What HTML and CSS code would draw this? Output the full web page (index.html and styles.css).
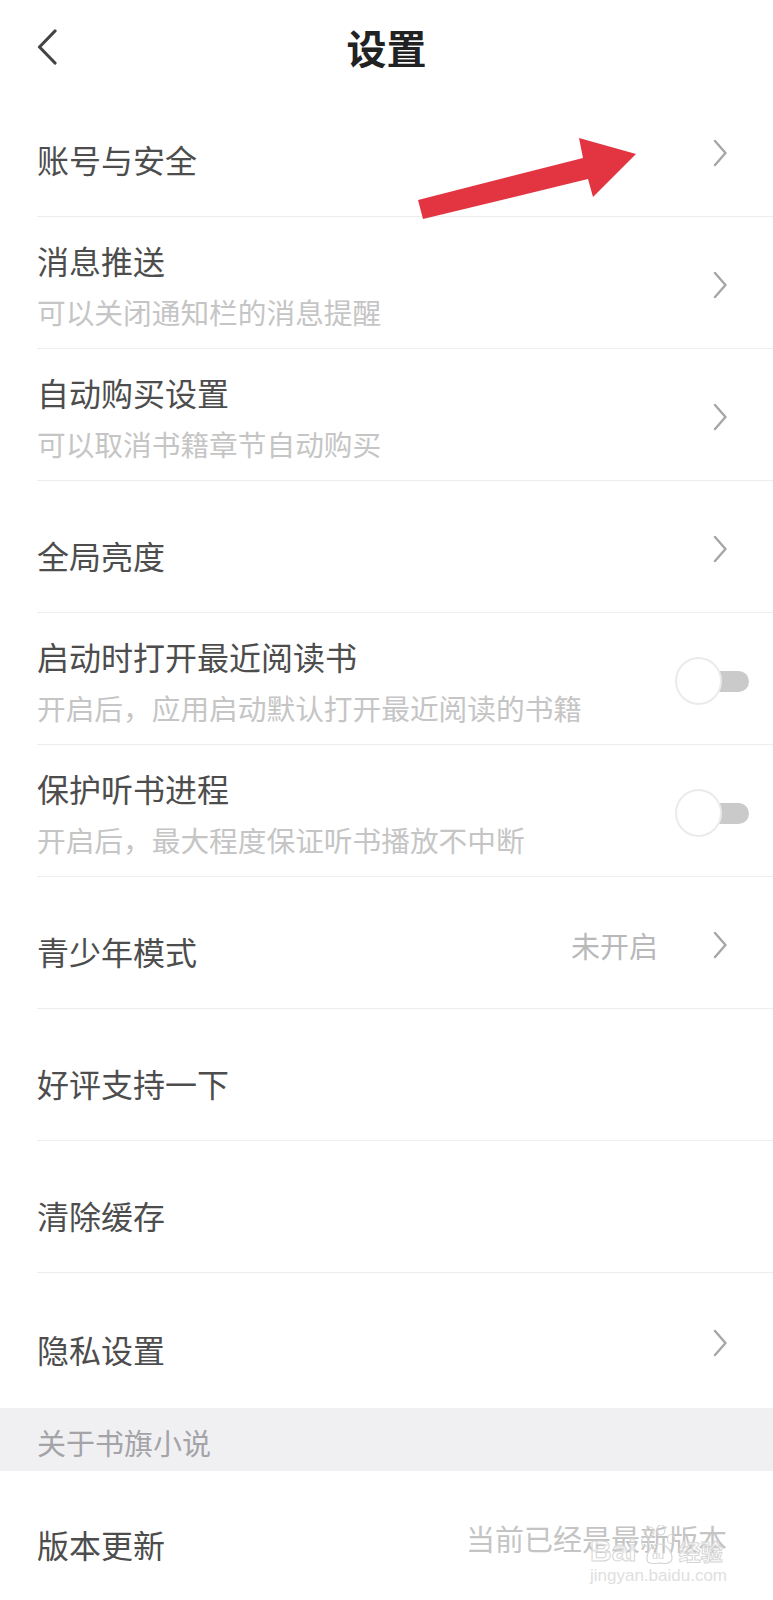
FILE: index.html
```html
<!DOCTYPE html>
<html lang="zh-CN">
<head>
    <meta charset="UTF-8">
    <meta name="viewport" content="width=device-width, initial-scale=1.0">
    <title>设置</title>
    <link rel="stylesheet" href="styles.css">
</head>
<body>
    <div class="page">
        <header class="nav">
            <span class="back">
                <svg width="20" height="36" viewBox="0 0 20 36"><path d="M18 2 L2.5 18 L18 34" fill="none" stroke="#444" stroke-width="3.2" stroke-linecap="round" stroke-linejoin="round"/></svg>
            </span>
            <h1 class="nav-title">设置</h1>
            <span></span>
        </header>

        <ul class="settings">
            <li class="row">
                <div class="row-main"><div class="row-title single">账号与安全</div></div>
                <svg class="chev" width="14" height="28" viewBox="0 0 14 28"><path d="M2 2 L12.5 14 L2 26" fill="none" stroke="#a6a6a6" stroke-width="2.4" stroke-linecap="round" stroke-linejoin="round"/></svg>
            </li>
            <li class="row">
                <div class="row-main">
                    <div class="row-title">消息推送</div>
                    <div class="row-sub">可以关闭通知栏的消息提醒</div>
                </div>
                <svg class="chev" width="14" height="28" viewBox="0 0 14 28"><path d="M2 2 L12.5 14 L2 26" fill="none" stroke="#a6a6a6" stroke-width="2.4" stroke-linecap="round" stroke-linejoin="round"/></svg>
            </li>
            <li class="row">
                <div class="row-main">
                    <div class="row-title">自动购买设置</div>
                    <div class="row-sub">可以取消书籍章节自动购买</div>
                </div>
                <svg class="chev" width="14" height="28" viewBox="0 0 14 28"><path d="M2 2 L12.5 14 L2 26" fill="none" stroke="#a6a6a6" stroke-width="2.4" stroke-linecap="round" stroke-linejoin="round"/></svg>
            </li>
            <li class="row">
                <div class="row-main"><div class="row-title single">全局亮度</div></div>
                <svg class="chev" width="14" height="28" viewBox="0 0 14 28"><path d="M2 2 L12.5 14 L2 26" fill="none" stroke="#a6a6a6" stroke-width="2.4" stroke-linecap="round" stroke-linejoin="round"/></svg>
            </li>
            <li class="row">
                <div class="row-main">
                    <div class="row-title">启动时打开最近阅读书</div>
                    <div class="row-sub">开启后，应用启动默认打开最近阅读的书籍</div>
                </div>
                <span class="toggle"><span class="toggle-track"></span><span class="toggle-knob"></span></span>
            </li>
            <li class="row">
                <div class="row-main">
                    <div class="row-title">保护听书进程</div>
                    <div class="row-sub">开启后，最大程度保证听书播放不中断</div>
                </div>
                <span class="toggle"><span class="toggle-track"></span><span class="toggle-knob"></span></span>
            </li>
            <li class="row">
                <div class="row-main"><div class="row-title single">青少年模式</div></div>
                <span class="row-value">未开启</span>
                <svg class="chev" width="14" height="28" viewBox="0 0 14 28"><path d="M2 2 L12.5 14 L2 26" fill="none" stroke="#a6a6a6" stroke-width="2.4" stroke-linecap="round" stroke-linejoin="round"/></svg>
            </li>
            <li class="row">
                <div class="row-main"><div class="row-title single">好评支持一下</div></div>
            </li>
            <li class="row">
                <div class="row-main"><div class="row-title single">清除缓存</div></div>
            </li>
            <li class="row last">
                <div class="row-main"><div class="row-title single">隐私设置</div></div>
                <svg class="chev" width="14" height="28" viewBox="0 0 14 28"><path d="M2 2 L12.5 14 L2 26" fill="none" stroke="#a6a6a6" stroke-width="2.4" stroke-linecap="round" stroke-linejoin="round"/></svg>
            </li>
        </ul>

        <div class="section-head">关于书旗小说</div>

        <ul class="settings">
            <li class="row version">
                <div class="row-main"><div class="row-title single">版本更新</div></div>
                <span class="row-value end">当前已经是最新版本</span>
            </li>
        </ul>

        <!-- red arrow drawn on top of the screenshot -->
        <svg class="pointer" width="773" height="240" viewBox="0 0 773 240">
            <polygon points="418,200 583,158 579,138 636,154 593,197 588,179 423,219" fill="#e23541"/>
        </svg>

        <div class="watermark">
            <div class="wm-logo">
                <span class="wm-bai">Bai</span>
                <svg class="wm-paw" width="36" height="40" viewBox="0 0 36 40">
                    <g fill="none" stroke="#d6d6d6" stroke-width="1.2">
                        <ellipse cx="9" cy="7" rx="4" ry="5"/>
                        <ellipse cx="20" cy="5" rx="4" ry="5"/>
                        <ellipse cx="4" cy="17" rx="3.5" ry="4.5"/>
                        <ellipse cx="30" cy="14" rx="3.5" ry="4.5"/>
                        <path d="M6 34 C6 24 13 19 18 19 C24 19 31 25 31 33 C31 39 24 39 18 38 C12 39 6 39 6 34 Z"/>
                    </g>
                    <text x="11" y="34" class="wm-du">du</text>
                </svg>
                <span class="wm-jy">经验</span>
            </div>
            <div class="wm-url">jingyan.baidu.com</div>
        </div>
    </div>
</body>
</html>
```

FILE: styles.css
```css
* {
    box-sizing: border-box;
}

body {
    margin: 0;
    background: #ffffff;
    font-family: "Noto Sans CJK SC", "Noto Sans", sans-serif;
}

.page {
    position: relative;
    width: 773px;
    height: 1600px;
    overflow: hidden;
}

.nav {
    height: 85px;
    display: grid;
    grid-template-columns: 1fr auto 1fr;
    align-items: start;
    padding-top: 21px;
}

.back {
    padding-left: 37px;
    padding-top: 8px;
    height: 52px;
}

.back svg {
    display: block;
}

.nav-title {
    margin: 0;
    font-size: 40px;
    line-height: 52px;
    font-weight: 700;
    color: #222222;
}

.settings {
    list-style: none;
    margin: 0;
    padding: 0;
}

.row {
    height: 132px;
    margin-left: 37px;
    padding: 4px 24px 0 0;
    border-bottom: 1px solid #ededed;
    display: flex;
    align-items: center;
}

.row.last {
    height: 135px;
    border-bottom: none;
}

.row.version {
    height: 130px;
    border-bottom: none;
}

.row-main {
    flex: 1;
    min-width: 0;
}

.row-title {
    font-size: 32px;
    line-height: 44px;
    color: #4d4d4d;
}

.row-title.single {
    margin-top: 12px;
}

.row-sub {
    margin-top: 10px;
    font-size: 28.7px;
    line-height: 40px;
    color: #c5c5c5;
}

.row-value {
    font-size: 29px;
    line-height: 40px;
    color: #b9b9b9;
    margin-right: 55px;
}

.row-value.end {
    margin-right: 22px;
    color: #c4c4c4;
}

.chev {
    display: block;
    margin-right: 22px;
}

.toggle {
    position: relative;
    width: 74px;
    height: 48px;
    flex-shrink: 0;
}

.toggle-track {
    position: absolute;
    left: 24px;
    right: 0;
    top: 14px;
    height: 21px;
    border-radius: 11px;
    background: #cacaca;
}

.toggle-knob {
    position: absolute;
    left: 0;
    top: 0;
    width: 47px;
    height: 48px;
    border-radius: 50%;
    background: #ffffff;
    border: 2.5px solid #ebebeb;
}

.section-head {
    height: 63px;
    padding: 6px 0 0 37px;
    background: #f0f0f2;
    font-size: 29px;
    line-height: 57px;
    color: #a3a3a8;
}

.pointer {
    position: absolute;
    left: 0;
    top: 0;
    pointer-events: none;
}

.watermark {
    position: absolute;
    left: 590px;
    top: 1515px;
    pointer-events: none;
}

.wm-logo {
    display: flex;
    align-items: flex-end;
    height: 50px;
}

.wm-bai,
.wm-jy {
    font-family: "Liberation Sans", "Noto Sans CJK SC", sans-serif;
    font-weight: 700;
    color: rgba(255, 255, 255, 0.6);
    -webkit-text-stroke: 1px #d6d6d6;
    line-height: 1;
}

.wm-bai {
    font-size: 30px;
    margin-bottom: -1px;
}

.wm-jy {
    font-size: 22px;
    margin-bottom: 1px;
}

.wm-paw {
    display: block;
    margin: 0 2px 0 4px;
}

.wm-du {
    font-family: "Liberation Sans", sans-serif;
    font-size: 11px;
    fill: #d6d6d6;
}

.wm-url {
    margin-top: 2px;
    font-family: "Liberation Sans", sans-serif;
    font-size: 17px;
    line-height: 18px;
    color: #e0e0e0;
}
```
